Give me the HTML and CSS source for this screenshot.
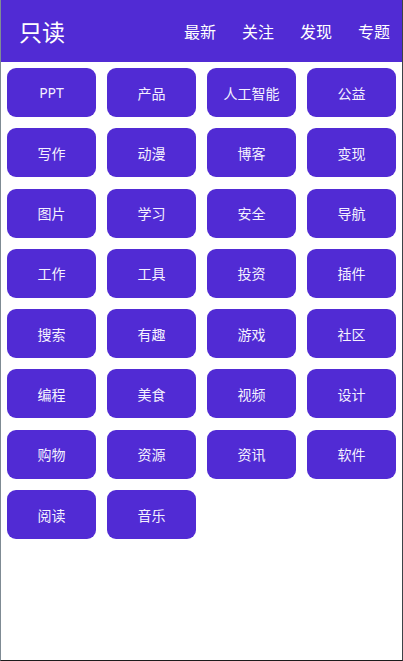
FILE: index.html
```html
<!DOCTYPE html>
<html lang="zh">
<head>
<meta charset="utf-8">
<title>只读</title>
<link rel="stylesheet" href="styles.css">
</head>
<body>
<div class="frame">
  <header class="topbar">
    <div class="title">只读</div>
    <nav class="nav">
      <span>最新</span>
      <span>关注</span>
      <span>发现</span>
      <span>专题</span>
    </nav>
  </header>
  <main class="grid">
    <div class="tag">PPT</div>
    <div class="tag">产品</div>
    <div class="tag">人工智能</div>
    <div class="tag">公益</div>
    <div class="tag">写作</div>
    <div class="tag">动漫</div>
    <div class="tag">博客</div>
    <div class="tag">变现</div>
    <div class="tag">图片</div>
    <div class="tag">学习</div>
    <div class="tag">安全</div>
    <div class="tag">导航</div>
    <div class="tag">工作</div>
    <div class="tag">工具</div>
    <div class="tag">投资</div>
    <div class="tag">插件</div>
    <div class="tag">搜索</div>
    <div class="tag">有趣</div>
    <div class="tag">游戏</div>
    <div class="tag">社区</div>
    <div class="tag">编程</div>
    <div class="tag">美食</div>
    <div class="tag">视频</div>
    <div class="tag">设计</div>
    <div class="tag">购物</div>
    <div class="tag">资源</div>
    <div class="tag">资讯</div>
    <div class="tag">软件</div>
    <div class="tag">阅读</div>
    <div class="tag">音乐</div>
  </main>
</div>
</body>
</html>
```

FILE: styles.css
```css
html, body {
  margin: 0;
  padding: 0;
  background: #ffffff;
}

body {
  font-family: "Noto Sans", "Noto Sans CJK SC", sans-serif;
}

.frame {
  box-sizing: border-box;
  width: 403px;
  height: 661px;
  border-left: 1px solid #7f8b94;
  border-right: 1px solid #3c4247;
  border-bottom: 1px solid #1c1c1c;
  background: #ffffff;
  overflow: hidden;
}

.topbar {
  height: 62px;
  background: #512bd4;
  display: flex;
  align-items: center;
  justify-content: space-between;
  padding: 0 12px 0 18px;
  color: #ffffff;
}

.title {
  font-size: 23px;
  line-height: 1;
  padding-top: 2px;
}

.nav {
  display: flex;
  gap: 26px;
  font-size: 16px;
  line-height: 1;
  padding-top: 1px;
}

.grid {
  display: grid;
  grid-template-columns: repeat(4, 89px);
  grid-auto-rows: 49px;
  column-gap: 11px;
  row-gap: 11.3px;
  padding: 6px 0 0 6px;
}

.tag {
  background: #512bd4;
  border-radius: 9px;
  color: #f4f1ff;
  font-size: 14px;
  display: flex;
  align-items: center;
  justify-content: center;
}
```
